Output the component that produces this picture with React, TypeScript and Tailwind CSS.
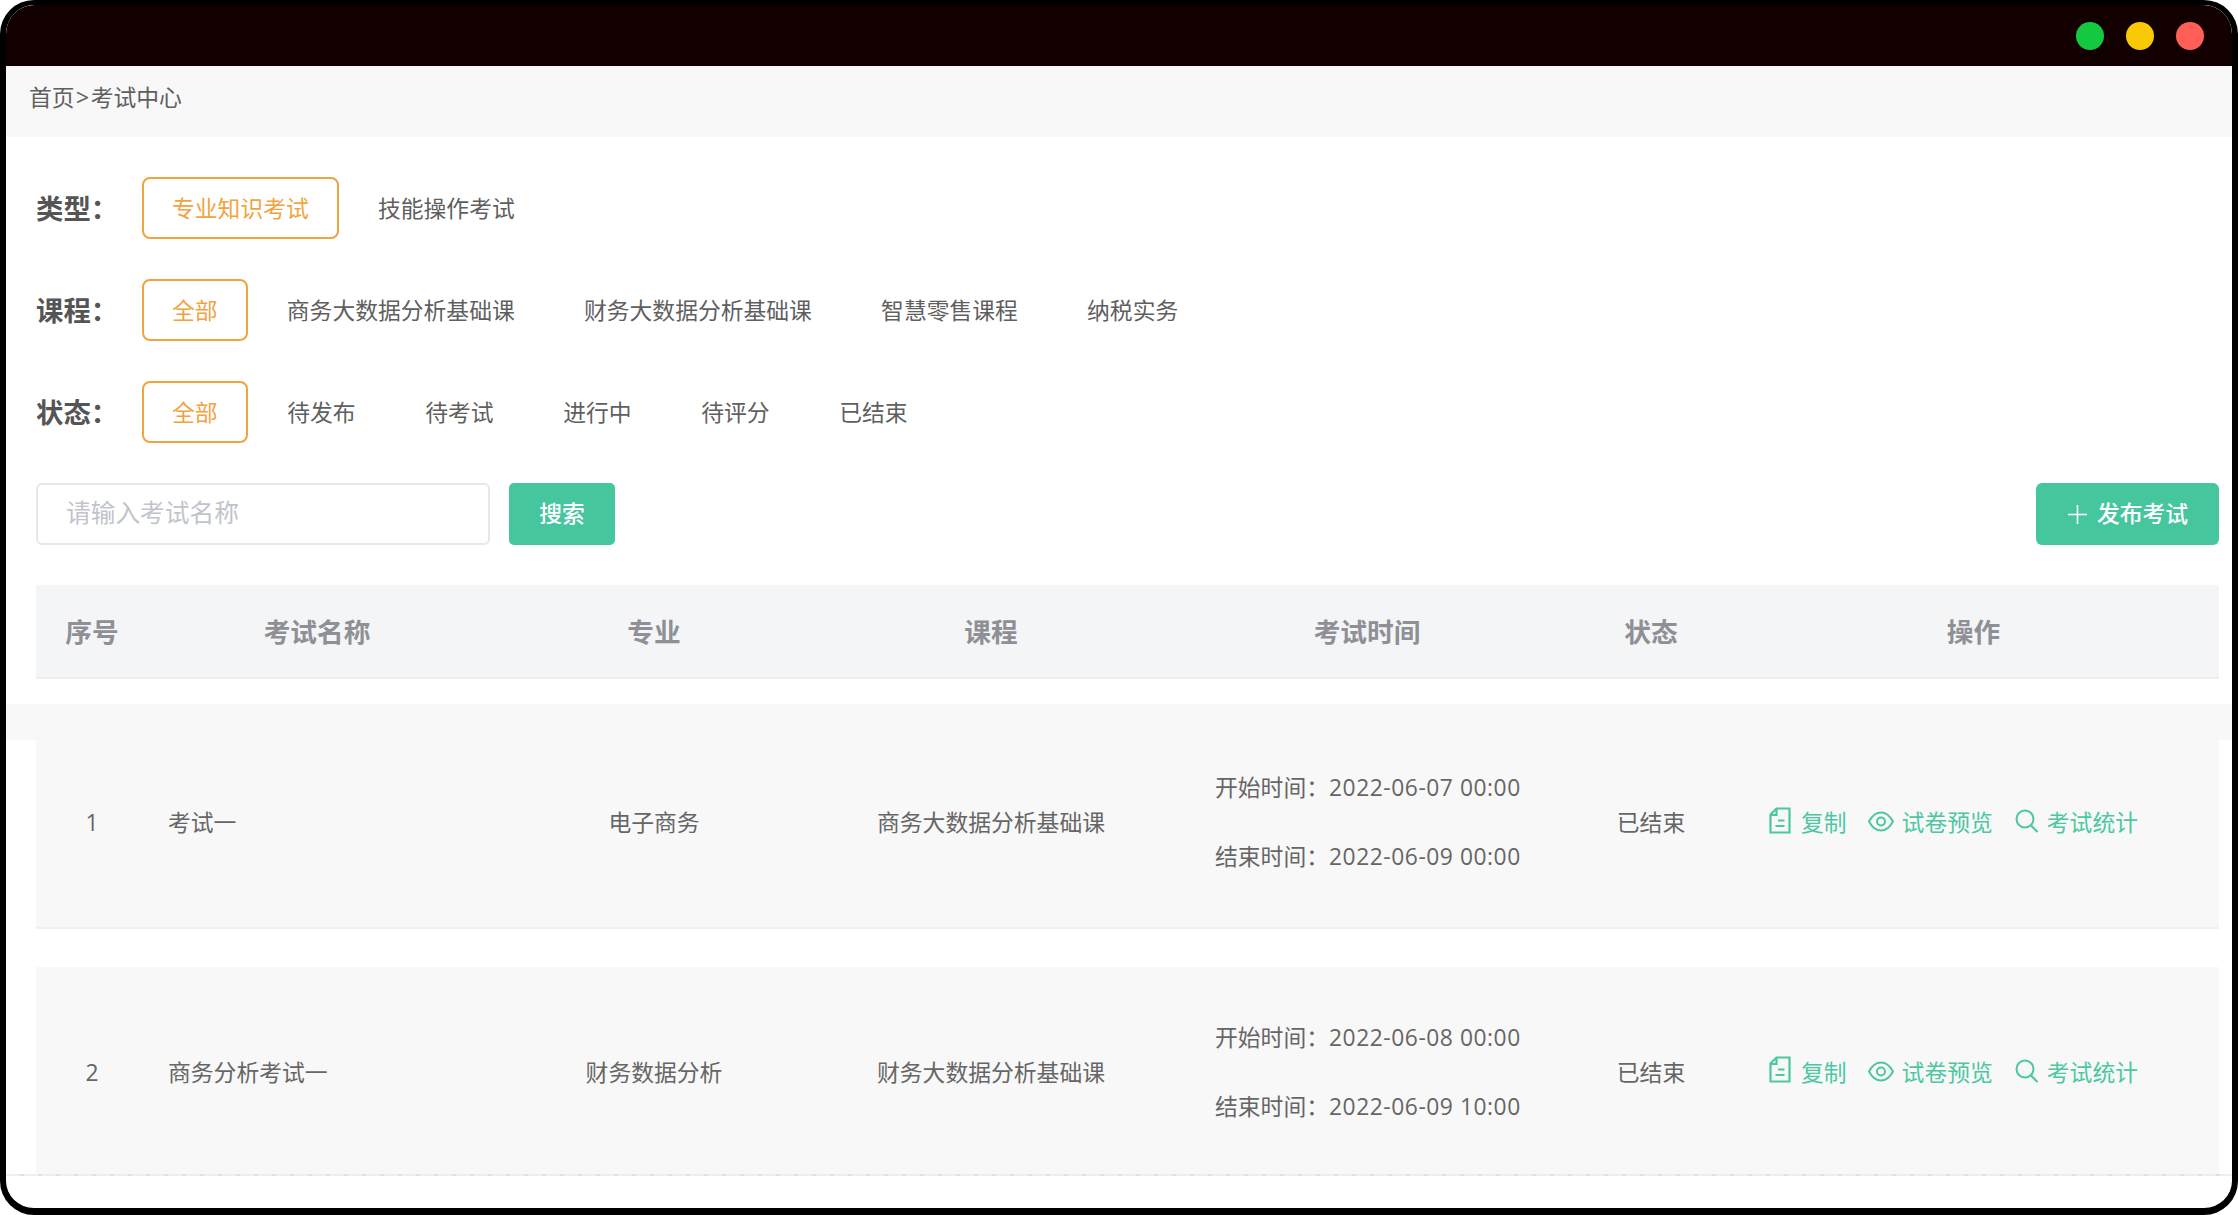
const courses = ['全部', '商务大数据分析基础课', '财务大数据分析基础课', '智慧零售课程', '纳税实务']
const statuses = ['全部', '待发布', '待考试', '进行中', '待评分', '已结束']

const exams = [
  { id: 1, name: '考试一', major: '电子商务', course: '商务大数据分析基础课', start: '2022-06-07 00:00', end: '2022-06-09 00:00', status: '已结束' },
  { id: 2, name: '商务分析考试一', major: '财务数据分析', course: '财务大数据分析基础课', start: '2022-06-08 00:00', end: '2022-06-09 10:00', status: '已结束' },
]

const cols = 'grid grid-cols-[112px_338px_336px_338px_414px_154px_491px] items-center'

function FilterRow({ label, items, gap = 'mr-[9.2px]' }: { label: string; items: string[]; gap?: string }) {
  return (
    <div className="flex h-[62px] items-center">
      <div className="w-[106px] pt-[1px] text-[27.4px] font-bold text-[#555555]">{label}</div>
      {items.map((item, i) => (
        <div
          key={item}
          className={
            i === 0
              ? `${gap} flex h-[62px] items-center rounded-[8px] border-2 border-[#efa43f] px-[28px] pt-[2px] text-[#efa43f]`
              : `${gap} flex h-[62px] items-center px-[30px] pt-[2px] text-[#5f5f5f]`
          }
        >
          {item}
        </div>
      ))}
    </div>
  )
}

function DocIcon() {
  return (
    <svg width="22" height="27" viewBox="0 0 22 27" fill="none" stroke="#4cc7a2" strokeWidth="2.2" className="mb-[7px]">
      <path d="M7.5 1.5H20.5V25.5H1.5V7.5Z" />
      <path d="M7.5 2V8H2" />
      <path d="M9 13.5H15.5M6.5 19H15.5" />
    </svg>
  )
}

function EyeIcon() {
  return (
    <svg width="26" height="21" viewBox="0 0 26 21" fill="none" stroke="#4cc7a2" strokeWidth="2" className="mb-[4px]">
      <path d="M1 10.5C4.5 4 9 1.5 13 1.5S21.5 4 25 10.5C21.5 17 17 19.5 13 19.5S4.5 17 1 10.5Z" />
      <circle cx="13" cy="10.5" r="4" />
    </svg>
  )
}

function SearchIcon() {
  return (
    <svg width="23" height="24" viewBox="0 0 23 24" fill="none" stroke="#4cc7a2" strokeWidth="2" className="mb-[5px]">
      <circle cx="10" cy="10" r="8.5" />
      <path d="M16 16.5L22.5 23" />
    </svg>
  )
}

function ExamRow({ exam, className }: { exam: (typeof exams)[number]; className: string }) {
  return (
    <div className={`${cols} bg-[#f8f8f8] text-[#666666] ${className}`}>
      <div className="text-center">{exam.id}</div>
      <div className="pl-[20px]">{exam.name}</div>
      <div className="text-center">{exam.major}</div>
      <div className="text-center">{exam.course}</div>
      <div className="mb-[3px] pl-[55px] leading-[69px]">
        <div>开始时间：<span className="tracking-[0.55px]">{exam.start}</span></div>
        <div>结束时间：<span className="tracking-[0.55px]">{exam.end}</span></div>
      </div>
      <div className="text-center">{exam.status}</div>
      <div className="flex items-center pl-[41px] text-[#4cc7a2]">
        <DocIcon />
        <span className="ml-[10px]">复制</span>
        <span className="ml-[21px] flex items-center">
          <EyeIcon />
          <span className="ml-[8px]">试卷预览</span>
        </span>
        <span className="ml-[22px] flex items-center">
          <SearchIcon />
          <span className="ml-[9px]">考试统计</span>
        </span>
      </div>
    </div>
  )
}

export default function App() {
  return (
    <div className="h-[1215px] w-[2238px] overflow-hidden bg-white font-['Open_Sans','Noto_Sans_CJK_SC',sans-serif] text-[22.8px]">
      <div className="h-full overflow-hidden rounded-[34px] border-[6px] border-t-[5px] border-b-[7px] border-black">
        {/* title bar */}
        <div className="flex h-[61px] items-center justify-end gap-[22px] rounded-t-[28px] bg-[#120000] pr-[28px]">
          <span className="h-[28px] w-[28px] rounded-full bg-[#14c840]" />
          <span className="h-[28px] w-[28px] rounded-full bg-[#fac905]" />
          <span className="h-[28px] w-[28px] rounded-full bg-[#ff5f57]" />
        </div>

        <div className="flex h-[71px] items-center bg-[#f8f8f8] pb-[7px] pl-[23px] text-[#5f5f5f]">
          首页<span className="mx-[1.5px]">&gt;</span>考试中心
        </div>

        <div className="pl-[30px] pr-[13px]">
          <div className="mt-[40px] flex flex-col gap-[40px]">
            <FilterRow label="类型：" items={['专业知识考试', '技能操作考试']} />
            <FilterRow label="课程：" items={courses} />
            <FilterRow label="状态：" items={statuses} gap="mr-[9.6px]" />

            <div className="flex h-[62px] items-center justify-between">
              <div className="flex items-center">
                <input
                  placeholder="请输入考试名称"
                  className="h-[62px] w-[454px] rounded-[6px] border-2 border-[#e4e7ed] pb-[3px] pl-[28px] text-[24.7px] outline-none placeholder:text-[#c0c4cc]"
                />
                <button className="ml-[19px] h-[62px] w-[106px] rounded-[5px] bg-[#45c69e] font-medium text-white">搜索</button>
              </div>
              <button className="flex h-[62px] w-[183px] items-center justify-center gap-[10px] rounded-[6px] bg-[#45c69e] pl-[1px] font-medium text-white">
                <svg width="19" height="19" viewBox="0 0 19 19" stroke="#ffffff" strokeWidth="1.6">
                  <path d="M0 9.5H19M9.5 0V19" />
                </svg>
                发布考试
              </button>
            </div>
          </div>

          {/* table */}
          <div className={`${cols} mt-[40px] h-[94px] border-b-2 border-[#eceef2] bg-[#f4f5f7] pt-[2px] text-center text-[26.7px] font-bold text-[#8e9096]`}>
            <div>序号</div>
            <div>考试名称</div>
            <div>专业</div>
            <div>课程</div>
            <div>考试时间</div>
            <div>状态</div>
            <div>操作</div>
          </div>

          <div className="-ml-[30px] -mr-[13px] mt-[25px] h-[36px] bg-[#f8f8f8]" />
          <ExamRow exam={exams[0]} className="-mt-[22px] h-[211px] border-b-2 border-[#eef0f5] pt-[2px]" />
          <ExamRow exam={exams[1]} className="mt-[38px] h-[207px] pt-[5px]" />
          <div className="-ml-[30px] -mr-[13px] h-[2px] bg-[repeating-linear-gradient(90deg,#eeeeee_0,#eeeeee_14px,#e0e0e0_14px,#e0e0e0_18px)]" />
        </div>
      </div>
    </div>
  )
}
